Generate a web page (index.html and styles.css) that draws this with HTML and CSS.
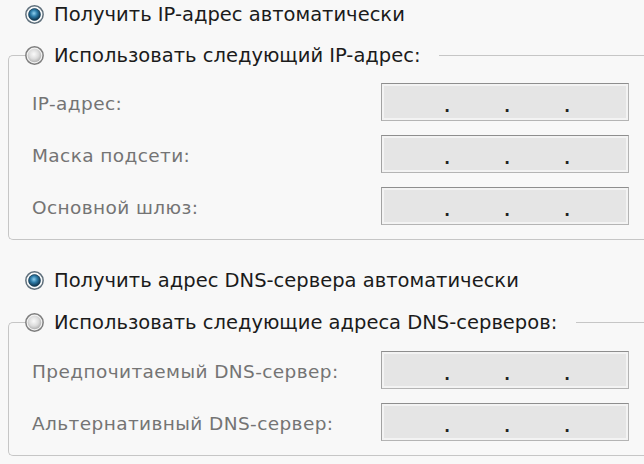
FILE: index.html
```html
<!DOCTYPE html>
<html lang="ru">
<head>
    <meta charset="UTF-8">
    <title>Свойства: IP версии 4</title>
    <link rel="stylesheet" href="styles.css">
</head>
<body>
    <!-- IP -->
    <div class="option">
        <svg class="radio" viewBox="0 0 18 18"><use href="#radio-on"/></svg>
        <span>Получить IP-адрес автоматически</span>
    </div>
    <fieldset class="group first">
        <legend class="option">
            <svg class="radio" viewBox="0 0 18 18"><use href="#radio-off"/></svg>
            <span>Использовать следующий IP-адрес:</span>
        </legend>
        <div class="row">
            <span class="label">IP-адрес:</span>
            <div class="ipbox"><span>.</span><span>.</span><span>.</span></div>
        </div>
        <div class="row">
            <span class="label">Маска подсети:</span>
            <div class="ipbox"><span>.</span><span>.</span><span>.</span></div>
        </div>
        <div class="row">
            <span class="label">Основной шлюз:</span>
            <div class="ipbox"><span>.</span><span>.</span><span>.</span></div>
        </div>
    </fieldset>

    <!-- DNS -->
    <div class="option dns">
        <svg class="radio" viewBox="0 0 18 18"><use href="#radio-on"/></svg>
        <span>Получить адрес DNS-сервера автоматически</span>
    </div>
    <fieldset class="group second">
        <legend class="option">
            <svg class="radio" viewBox="0 0 18 18"><use href="#radio-off"/></svg>
            <span>Использовать следующие адреса DNS-серверов:</span>
        </legend>
        <div class="row">
            <span class="label">Предпочитаемый DNS-сервер:</span>
            <div class="ipbox"><span>.</span><span>.</span><span>.</span></div>
        </div>
        <div class="row">
            <span class="label">Альтернативный DNS-сервер:</span>
            <div class="ipbox"><span>.</span><span>.</span><span>.</span></div>
        </div>
    </fieldset>

    <svg class="defs" width="0" height="0">
        <defs>
            <radialGradient id="dot" cx="45%" cy="40%" r="60%">
                <stop offset="0" stop-color="#8fd0ef"/>
                <stop offset="0.45" stop-color="#2f7eab"/>
                <stop offset="1" stop-color="#0d2f47"/>
            </radialGradient>
            <radialGradient id="off" cx="45%" cy="40%" r="65%">
                <stop offset="0" stop-color="#fafafa"/>
                <stop offset="0.55" stop-color="#dcdcdc"/>
                <stop offset="1" stop-color="#a9a9a9"/>
            </radialGradient>
            <g id="radio-on">
                <circle cx="9" cy="9" r="8.2" fill="#f7f9fa" stroke="#5f6f7b" stroke-width="1.4"/>
                <circle cx="9" cy="9" r="5.6" fill="url(#dot)" stroke="#173f58" stroke-width="0.7"/>
            </g>
            <g id="radio-off">
                <circle cx="9" cy="9" r="8.2" fill="#f2f2f2" stroke="#7e7e7e" stroke-width="1.4"/>
                <circle cx="9" cy="9" r="6.4" fill="url(#off)"/>
            </g>
        </defs>
    </svg>
</body>
</html>
```

FILE: styles.css
```css
body {
    background-color: #f8f8f8;
    margin: 0;
    padding: 2px 0 0 0;
    overflow: hidden;
    font-family: "DejaVu Sans", sans-serif;
}

.option {
    display: flex;
    align-items: center;
    height: 24px;
    padding-left: 26px;
    font-size: 19.5px;
    color: #1b1b1b;
}

.radio {
    width: 19px;
    height: 19px;
    margin-left: -1px;
    margin-right: 10px;
    flex-shrink: 0;
}

.group {
    border: 1px solid #c6c6c6;
    border-right: none;
    border-radius: 5px 0 0 5px;
    margin: 17px 0 0 8px;
    padding: 16px 0 14px 23px;
    min-width: 0;
}

.group legend.option {
    padding: 0 19px 0 0;
    margin-left: -6px;
}

.group.second {
    margin-top: 18px;
    padding-top: 17px;
}

.dns {
    margin-top: 28px;
}

.row {
    display: grid;
    grid-template-columns: 349px 248px;
    align-items: center;
    height: 38px;
}

.row + .row {
    margin-top: 14px;
}

.label {
    font-size: 18.5px;
    color: #747474;
    letter-spacing: 0.4px;
    padding-top: 3px;
    white-space: nowrap;
}

.ipbox {
    box-sizing: border-box;
    height: 38px;
    border: 1px solid #b4b4b4;
    border-top-color: #8e8e8e;
    border-left-color: #a2a2a2;
    background-color: #e5e5e5;
    box-shadow: inset 0 0 0 2px #f3f3f3;
    display: flex;
    padding-left: 8px;
}

.ipbox span {
    width: 60px;
    text-align: right;
    font-size: 15px;
    font-weight: bold;
    color: #222222;
    line-height: 38px;
    padding-top: 4px;
}

.defs {
    position: absolute;
}
```
